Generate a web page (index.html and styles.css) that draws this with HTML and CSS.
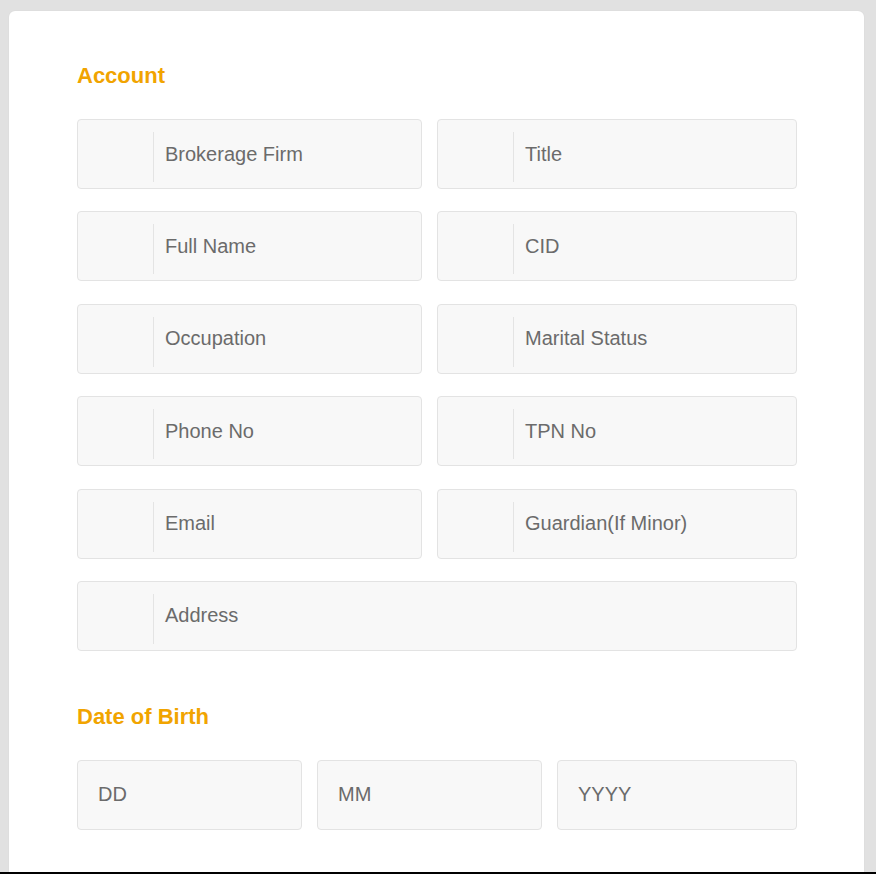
FILE: index.html
```html
<!DOCTYPE html>
<html lang="en">
<head>
<meta charset="utf-8">
<title>Account</title>
<link rel="stylesheet" href="styles.css">
</head>
<body>
<div class="card">
  <section class="section">
    <h2 class="section-title">Account</h2>
    <div class="grid grid-2">
      <div class="field"><span class="field-icon"></span><span class="field-input">Brokerage Firm</span></div>
      <div class="field"><span class="field-icon"></span><span class="field-input">Title</span></div>
      <div class="field"><span class="field-icon"></span><span class="field-input">Full Name</span></div>
      <div class="field"><span class="field-icon"></span><span class="field-input">CID</span></div>
      <div class="field"><span class="field-icon"></span><span class="field-input">Occupation</span></div>
      <div class="field"><span class="field-icon"></span><span class="field-input">Marital Status</span></div>
      <div class="field"><span class="field-icon"></span><span class="field-input">Phone No</span></div>
      <div class="field"><span class="field-icon"></span><span class="field-input">TPN No</span></div>
      <div class="field"><span class="field-icon"></span><span class="field-input">Email</span></div>
      <div class="field"><span class="field-icon"></span><span class="field-input">Guardian(If Minor)</span></div>
      <div class="field field-wide"><span class="field-icon"></span><span class="field-input">Address</span></div>
    </div>
  </section>
  <section class="section">
    <h2 class="section-title">Date of Birth</h2>
    <div class="grid grid-3">
      <div class="field field-plain">DD</div>
      <div class="field field-plain">MM</div>
      <div class="field field-plain">YYYY</div>
    </div>
  </section>
</div>
<div class="bottom-rule"></div>
</body>
</html>
```
FILE: styles.css
```css
html, body {
  margin: 0;
  padding: 0;
}
body {
  background: #e1e1e1;
  font-family: "Liberation Sans", Arial, sans-serif;
  padding: 11px 12px 0 9px;
  min-height: 874px;
  box-sizing: border-box;
  overflow: hidden;
}
.card {
  background: #fff;
  border-radius: 6px;
  padding: 52px 67px 60px 68px;
  min-height: 900px;
  box-shadow: 0 0 2px rgba(0,0,0,0.06);
}
.section + .section {
  margin-top: 53px;
}
.section-title {
  margin: 0 0 31px;
  font-size: 22px;
  line-height: 25px;
  font-weight: bold;
  color: #f1a400;
}
.grid {
  display: grid;
  row-gap: 22.4px;
  column-gap: 15px;
}
.grid-2 {
  grid-template-columns: 345px 360px;
}
.grid-3 {
  grid-template-columns: 225px 225px 240px;
}
.field {
  box-sizing: border-box;
  height: 70px;
  background: #f8f8f8;
  border: 1px solid #e3e3e3;
  border-radius: 4px;
  display: flex;
  align-items: center;
  color: #6b6b6b;
  font-size: 20px;
}
.field-wide {
  grid-column: 1 / -1;
}
.field-icon {
  width: 75px;
  flex: none;
}
.field-input {
  align-self: stretch;
  display: flex;
  align-items: center;
  position: relative;
  padding-left: 12px;
  flex: 1;
}
.field-input::before {
  content: "";
  position: absolute;
  left: 0;
  top: 12px;
  height: 50px;
  border-left: 1px solid #e4e4e4;
}
.field-plain {
  padding-left: 20px;
}
.bottom-rule {
  position: fixed;
  left: 0;
  right: 0;
  bottom: 0;
  height: 2px;
  background: #000;
}
```
